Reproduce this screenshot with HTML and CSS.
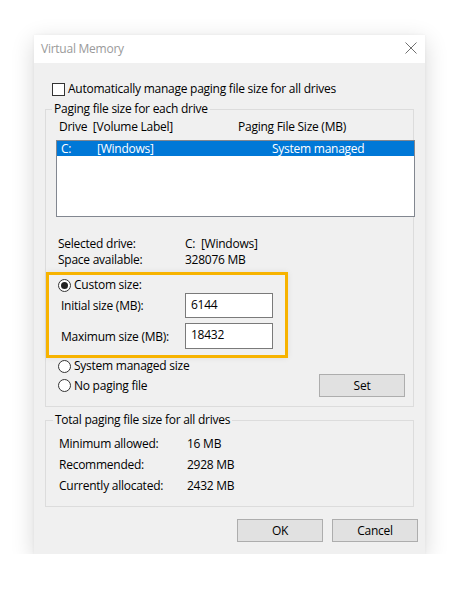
FILE: index.html
```html
<!DOCTYPE html>
<html>
<head>
<meta charset="utf-8">
<title>Virtual Memory</title>
<link rel="stylesheet" href="styles.css">
</head>
<body>
<div class="window">
  <div class="titlebar">
    <span class="title">Virtual Memory</span>
    <svg class="close" width="12" height="12" viewBox="0 0 12 12"><path d="M0.5 0.5 L11.5 11.5 M11.5 0.5 L0.5 11.5" stroke="#707070" stroke-width="1" fill="none"/></svg>
  </div>
  <div class="content">
    <div class="check-row"><span class="checkbox"></span><span>Automatically manage paging file size for all drives</span></div>
    <fieldset class="group group-drives">
      <legend>Paging file size for each drive</legend>
      <div class="list-header"><span class="col-drive">Drive&nbsp; [Volume Label]</span><span>Paging File Size (MB)</span></div>
      <div class="listbox">
        <div class="list-item selected"><span class="c1">C:</span><span class="c2">[Windows]</span><span>System managed</span></div>
      </div>
      <div class="info-row first"><span class="info-label">Selected drive:</span><span>C:&nbsp; [Windows]</span></div>
      <div class="info-row"><span class="info-label">Space available:</span><span>328076 MB</span></div>
      <div class="highlight">
        <div class="radio-row"><span class="radio checked"></span><span>Custom size:</span></div>
        <div class="field-row"><span class="field-label">Initial size (MB):</span><span class="input">6144</span></div>
        <div class="field-row second"><span class="field-label">Maximum size (MB):</span><span class="input tall">18432</span></div>
      </div>
      <div class="radio-row"><span class="radio"></span><span>System managed size</span></div>
      <div class="set-row">
        <div class="radio-row"><span class="radio"></span><span>No paging file</span></div>
        <button class="btn">Set</button>
      </div>
    </fieldset>
    <fieldset class="group group-total">
      <legend>Total paging file size for all drives</legend>
      <div class="total-row"><span class="total-label">Minimum allowed:</span><span>16 MB</span></div>
      <div class="total-row"><span class="total-label">Recommended:</span><span>2928 MB</span></div>
      <div class="total-row"><span class="total-label">Currently allocated:</span><span>2432 MB</span></div>
    </fieldset>
    <div class="buttons">
      <button class="btn">OK</button>
      <button class="btn">Cancel</button>
    </div>
  </div>
</div>
</body>
</html>
```
FILE: styles.css
```css
* { box-sizing: border-box; }
html, body { margin: 0; background: #ffffff; }
body {
  padding: 35px 0 0 34px;
  font-family: "Open Sans", "Noto Sans", sans-serif;
  font-size: 12px;
  letter-spacing: -0.25px;
  color: #000;
}
.window {
  width: 391px;
  height: 519px;
  background: #f0f0f0;
  box-shadow: 0 6px 22px rgba(0, 0, 0, 0.16), 0 0 3px rgba(0,0,0,0.05);
  display: flex;
  flex-direction: column;
}
.titlebar {
  height: 28px;
  background: #fff;
  display: flex;
  align-items: center;
  justify-content: space-between;
  padding: 0 8px 1px 7px;
}
.title { color: #9a9a9a; font-size: 12px; }
.close { display: block; margin-top: -1px; }
.content {
  padding: 18px 0 12px;
  display: flex;
  flex-direction: column;
}
.check-row {
  height: 16px;
  line-height: 16px;
  display: flex;
  align-items: center;
  padding-left: 18px;
}
.checkbox {
  width: 13px;
  height: 13px;
  border: 1px solid #333;
  background: #fff;
  margin-right: 3px;
}
.group {
  margin: 4px 11px 0;
  border: 1px solid #dcdcdc;
  min-width: 0;
}
.group legend {
  line-height: 16px;
  padding: 0 2px;
  margin-left: -6px;
}
.group-drives { padding: 2px 7px 9px 12px; }
.list-header { height: 16px; line-height: 16px; display: flex; padding-left: 1px; }
.col-drive { width: 179px; }
.listbox {
  margin: 5px 0 0 -2px;
  width: 359px;
  height: 77px;
  border: 1px solid #828790;
  background: #fff;
}
.list-item { height: 15px; line-height: 15px; display: flex; padding-left: 4px; }
.list-item.selected { background: #0078d7; color: #fff; }
.c1 { width: 36px; }
.c2 { width: 175px; }
.info-row { height: 16px; line-height: 16px; display: flex; }
.info-row.first { margin-top: 19px; }
.info-label { width: 127px; }
.highlight {
  margin: 4px 0 0 -12px;
  width: 242px;
  border: 3px solid #f7b300;
  padding: 2px 0 6px 9px;
  box-shadow: 0 0 6px rgba(0, 0, 0, 0.08);
}
.radio-row { height: 16px; line-height: 16px; display: flex; align-items: center; }
.radio {
  width: 13px;
  height: 13px;
  border: 1px solid #333;
  border-radius: 50%;
  background: #fff;
  margin-right: 3px;
  display: flex;
  align-items: center;
  justify-content: center;
}
.radio.checked::after {
  content: "";
  width: 7px;
  height: 7px;
  border-radius: 50%;
  background: #222;
}
.field-row { height: 25px; display: flex; align-items: center; }
.field-row.second { margin-top: 5px; height: 26px; }
.field-label { width: 124px; margin-left: 3px; }
.input {
  width: 88px;
  height: 25px;
  border: 1px solid #7a7a7a;
  background: #fff;
  padding: 0 5px;
  line-height: 21px;
}
.input.tall { height: 26px; }
.set-row { height: 23px; display: flex; align-items: center; justify-content: space-between; padding-right: 1px; }
.btn {
  font: inherit;
  letter-spacing: inherit;
  color: #000;
  width: 86px;
  height: 23px;
  background: #e1e1e1;
  border: 1px solid #adadad;
  padding: 0;
}
.group-total { margin-top: 5px; padding: 5px 7px 10px 13px; }
.total-row { height: 21px; line-height: 21px; display: flex; }
.total-label { width: 128px; }
.buttons {
  margin-top: 12px;
  display: flex;
  justify-content: flex-end;
  gap: 9px;
  padding-right: 7px;
}
```
